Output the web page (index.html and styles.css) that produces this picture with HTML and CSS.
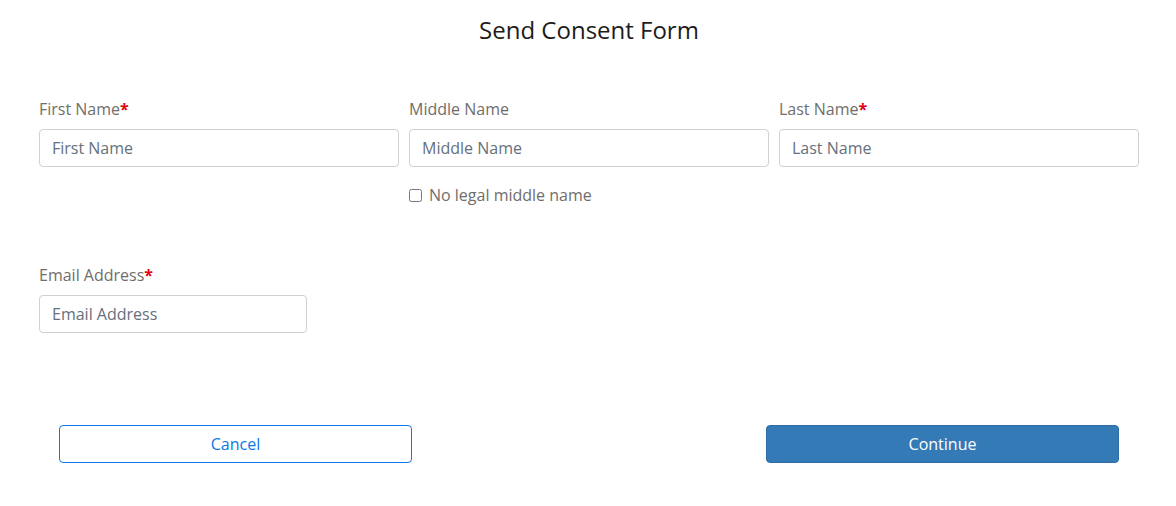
FILE: index.html
```html
<!DOCTYPE html>
<html lang="en">
  <head>
    <meta charset="UTF-8" />
    <meta name="viewport" content="width=device-width, initial-scale=1.0" />
    <title>Send Consent Form</title>
    <link rel="stylesheet" href="styles.css">
  </head>
  <body>
    <div class="modal">
      <h1 class="title">Send Consent Form</h1>
      <form id="consentForm">
        <div class="name-row">
          <div class="field">
            <label for="first_name">First Name<span class="req">*</span></label>
            <input type="text" id="first_name" placeholder="First Name" />
          </div>
          <div class="field">
            <label for="middle_name">Middle Name</label>
            <input type="text" id="middle_name" placeholder="Middle Name" />
            <label class="check">
              <input type="checkbox" id="no_middle" />
              <span>No legal middle name</span>
            </label>
          </div>
          <div class="field">
            <label for="last_name">Last Name<span class="req">*</span></label>
            <input type="text" id="last_name" placeholder="Last Name" />
          </div>
        </div>
        <div class="field email">
          <label for="email">Email Address<span class="req">*</span></label>
          <input type="email" id="email" placeholder="Email Address" />
        </div>
        <div class="actions">
          <button type="button" class="btn btn-cancel">Cancel</button>
          <button type="submit" class="btn btn-continue">Continue</button>
        </div>
      </form>
    </div>
  </body>
</html>
```

FILE: styles.css
```css
body {
  margin: 0;
  font-family: "Open Sans", Arial, sans-serif;
  background: #fff;
  color: #706e6b;
}
.modal {
  padding: 15px 37px 0 39px;
}
.title {
  margin: 0;
  text-align: center;
  font-size: 24px;
  font-weight: 400;
  line-height: 30px;
  color: #1d1c1b;
}
.name-row {
  display: grid;
  grid-template-columns: repeat(3, 1fr);
  gap: 10px;
  margin-top: 53px;
}
.field label {
  display: block;
  font-size: 16px;
  line-height: 22px;
  margin-bottom: 9px;
}
.req {
  color: #e3000f;
  font-weight: 700;
}
.field input[type="text"],
.field input[type="email"] {
  display: block;
  width: 100%;
  box-sizing: border-box;
  height: 38px;
  padding: 0 12px;
  border: 1px solid #cdd0d5;
  border-radius: 4px;
  font-family: inherit;
  font-size: 16px;
  color: #3e3e3c;
}
.field input::placeholder {
  color: #66707c;
}
.field .check {
  display: flex;
  align-items: center;
  gap: 7px;
  margin: 17px 0 0 0;
  line-height: 22px;
}
.check input {
  width: 13px;
  height: 13px;
  margin: 0;
}
.email {
  width: 268px;
  margin-top: 58px;
}
.actions {
  display: flex;
  justify-content: space-between;
  padding: 0 20px;
  margin-top: 92px;
}
.btn {
  width: 353px;
  height: 38px;
  border-radius: 4px;
  font-family: inherit;
  font-size: 16px;
  cursor: pointer;
}
.btn-cancel {
  background: #fff;
  border: 1px solid #0b78e6;
  color: #0b78e6;
}
.btn-continue {
  background: #337ab7;
  border: 1px solid #2e6da4;
  color: #fff;
}
```
